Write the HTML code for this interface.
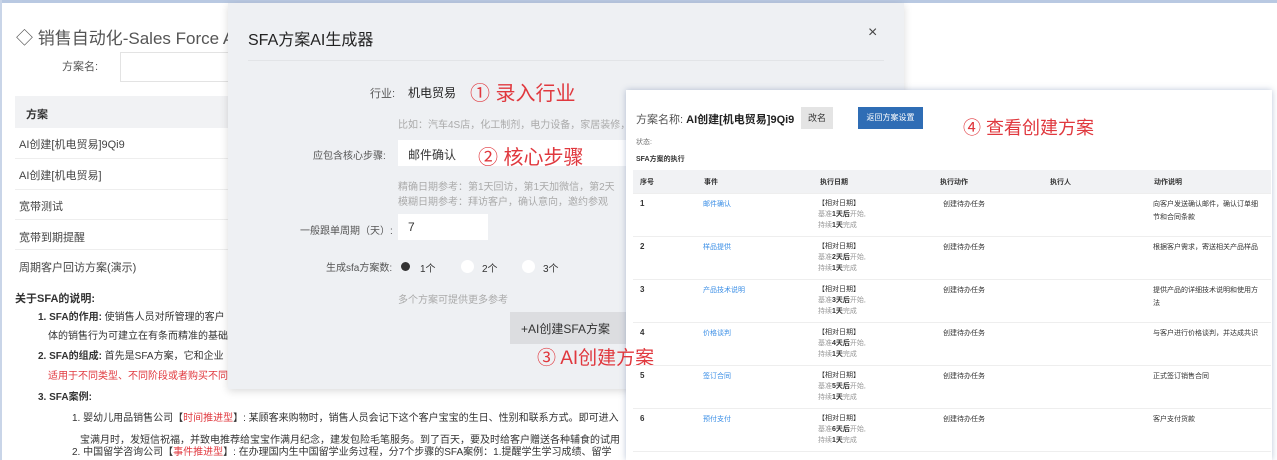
<!DOCTYPE html>
<html style="overflow:hidden;width:1277px;height:460px"><head><meta charset="utf-8"><style>
*{margin:0;padding:0;box-sizing:border-box}
body{width:1277px;height:460px;overflow:hidden;background:#fff;font-family:"Liberation Sans","Noto Sans CJK SC",sans-serif;color:#333;position:relative}
#w{position:absolute;left:0;top:0;width:1277px;height:460px;overflow:hidden}
.a{position:absolute;white-space:nowrap}
.red{color:#e0383e}
</style></head><body><div id="w">
<div class="a" style="left:0;top:0;width:1277px;height:3px;background:#b9c9e2"></div>
<div class="a" style="left:0;top:0;width:2px;height:460px;background:#c9d5e8"></div>
<!-- left page -->
<div class="a" style="left:16px;top:24px;font-size:17px;color:#555">◇ 销售自动化-Sales Force Au</div>
<div class="a" style="left:62px;top:58px;font-size:11px;color:#555">方案名:</div>
<div class="a" style="left:120px;top:52px;width:120px;height:30px;border:1px solid #e3e3e3;border-right:none"></div>
<div class="a" style="left:15px;top:96px;width:220px;height:32px;background:#f1f2f4"></div>
<div class="a" style="left:26px;top:106px;font-size:11px;font-weight:bold">方案</div>
<div class="a" style="left:19px;top:136px;font-size:11px;color:#444">AI创建[机电贸易]9Qi9</div>
<div class="a" style="left:15px;top:158px;width:220px;height:1px;background:#eee"></div>
<div class="a" style="left:19px;top:167px;font-size:11px;color:#444">AI创建[机电贸易]</div>
<div class="a" style="left:15px;top:189px;width:220px;height:1px;background:#eee"></div>
<div class="a" style="left:19px;top:198px;font-size:11px;color:#444">宽带测试</div>
<div class="a" style="left:15px;top:219px;width:220px;height:1px;background:#eee"></div>
<div class="a" style="left:19px;top:229px;font-size:11px;color:#444">宽带到期提醒</div>
<div class="a" style="left:15px;top:249px;width:220px;height:1px;background:#eee"></div>
<div class="a" style="left:19px;top:259px;font-size:11px;color:#444">周期客户回访方案(演示)</div>
<div class="a" style="left:15px;top:290px;font-size:11px;font-weight:bold">关于SFA的说明:</div>
<div class="a" style="left:38px;top:308px;font-size:10px"><b>1. SFA的作用:</b> 使销售人员对所管理的客户</div>
<div class="a" style="left:48px;top:327px;font-size:10px">体的销售行为可建立在有条而精准的基础</div>
<div class="a" style="left:38px;top:347px;font-size:10px"><b>2. SFA的组成:</b> 首先是SFA方案，它和企业</div>
<div class="a red" style="left:48px;top:367px;font-size:10px">适用于不同类型、不同阶段或者购买不同</div>
<div class="a" style="left:38px;top:388px;font-size:10px"><b>3. SFA案例:</b></div>
<div class="a" style="left:72px;top:409px;font-size:10px">1. 婴幼儿用品销售公司【<span class="red">时间推进型</span>】: 某顾客来购物时，销售人员会记下这个客户宝宝的生日、性别和联系方式。即可进入</div>
<div class="a" style="left:80px;top:431px;font-size:10px">宝满月时，发短信祝福，并致电推荐给宝宝作满月纪念，建发包险毛笔服务。到了百天，要及时给客户赠送各种辅食的试用</div>
<div class="a" style="left:72px;top:447px;font-size:10px;line-height:12px">2. 中国留学咨询公司【<span class="red">事件推进型</span>】: 在办理国内生中国留学业务过程，分7个步骤的SFA案例：1.提醒学生学习成绩、留学</div>
<!-- modal 1 -->
<div class="a" style="left:228px;top:3px;width:676px;height:386px;background:#eef0f3;box-shadow:0 2px 8px rgba(0,0,0,.15)"></div>
<div class="a" style="left:248px;top:26px;font-size:16px;color:#222">SFA方案AI生成器</div>
<div class="a" style="left:868px;top:24px;font-size:16px;color:#444">×</div>
<div class="a" style="left:248px;top:60px;width:636px;height:1px;background:#e2e4e7"></div>
<div class="a" style="left:370px;top:85px;font-size:11px;color:#555">行业:</div>
<div class="a" style="left:408px;top:84px;font-size:12px;color:#222">机电贸易</div>
<div class="a red" style="left:470px;top:77px;font-size:20px">① 录入行业</div>
<div class="a" style="left:398px;top:116px;font-size:10px;color:#aaa">比如：汽车4S店，化工制剂，电力设备，家居装修，</div>
<div class="a" style="left:313px;top:147px;font-size:10px;color:#555">应包含核心步骤:</div>
<div class="a" style="left:398px;top:140px;width:230px;height:26px;background:#fff"></div>
<div class="a" style="left:408px;top:146px;font-size:12px;color:#333">邮件确认</div>
<div class="a red" style="left:478px;top:141px;font-size:20px">② 核心步骤</div>
<div class="a" style="left:398px;top:178px;font-size:10px;color:#aaa">精确日期参考：第1天回访，第1天加微信，第2天</div>
<div class="a" style="left:398px;top:193px;font-size:10px;color:#aaa">模糊日期参考：拜访客户，确认意向，邀约参观</div>
<div class="a" style="left:300px;top:222px;font-size:10px;color:#555">一般跟单周期（天）:</div>
<div class="a" style="left:398px;top:214px;width:90px;height:26px;background:#fff"></div>
<div class="a" style="left:408px;top:220px;font-size:12px">7</div>
<div class="a" style="left:326px;top:259px;font-size:10px;color:#555">生成sfa方案数:</div>
<div class="a" style="left:401px;top:262px;width:9px;height:9px;border-radius:50%;background:#333"></div>
<div class="a" style="left:420px;top:260px;font-size:10px">1个</div>
<div class="a" style="left:461px;top:260px;width:13px;height:13px;border-radius:50%;background:#fff"></div>
<div class="a" style="left:482px;top:260px;font-size:10px">2个</div>
<div class="a" style="left:522px;top:260px;width:13px;height:13px;border-radius:50%;background:#fff"></div>
<div class="a" style="left:543px;top:260px;font-size:10px">3个</div>
<div class="a" style="left:398px;top:291px;font-size:10px;color:#aaa">多个方案可提供更多参考</div>
<div class="a" style="left:510px;top:312px;width:116px;height:32px;background:#dcdde0"></div>
<div class="a" style="left:521px;top:320px;font-size:12px;color:#333">+AI创建SFA方案</div>
<!-- modal 2 -->
<div class="a" style="left:626px;top:90px;width:646px;height:370px;background:#fff;box-shadow:0 0 6px rgba(60,90,140,.35)"></div>
<div class="a red" style="left:537px;top:343px;font-size:19px">③ AI创建方案</div>
<div class="a" style="left:636px;top:111px;font-size:11px;color:#555">方案名称: <span style="color:#222;font-weight:bold">AI创建[机电贸易]9Qi9</span></div>
<div class="a" style="left:801px;top:107px;width:32px;height:22px;background:#e4e4e4;font-size:9px;line-height:22px;text-align:center">改名</div>
<div class="a" style="left:858px;top:107px;width:65px;height:22px;background:#2f6db5;color:#fff;font-size:8px;line-height:22px;text-align:center">返回方案设置</div>
<div class="a red" style="left:963px;top:114px;font-size:18px">④ 查看创建方案</div>
<div class="a" style="left:636px;top:137px;font-size:7px;color:#777">状态:</div>
<div class="a" style="left:636px;top:154px;font-size:7px;font-weight:bold">SFA方案的执行</div>
<div class="a" style="left:633px;top:170px;width:638px;height:23px;background:#f1f2f4"></div>
<div class="a" style="left:640px;top:177px;font-size:7px;font-weight:bold">
<span class="a" style="left:0">序号</span><span class="a" style="left:64px">事件</span><span class="a" style="left:180px">执行日期</span><span class="a" style="left:300px">执行动作</span><span class="a" style="left:410px">执行人</span><span class="a" style="left:514px">动作说明</span></div>
<div id="rows"></div>
</div>
<script>
var ev=["邮件确认","样品提供","产品技术说明","价格谈判","签订合同","预付支付","跟进"];
var ds=["向客户发送确认邮件，确认订单细节和合同条款","根据客户需求，寄送相关产品样品","提供产品的详细技术说明和使用方法","与客户进行价格谈判，并达成共识","正式签订销售合同","客户支付货款","售后跟进"];
var h="";
for(var i=0;i<7;i++){var y=193+i*43;
h+='<div class="a" style="left:633px;top:'+y+'px;width:638px;height:1px;background:#eee"></div>';
if(i==6){break;}
h+='<div class="a" style="left:640px;top:'+(y+6)+'px;font-size:8px;font-weight:bold">'+(i+1)+'</div>';
h+='<div class="a" style="left:703px;top:'+(y+6)+'px;font-size:7px;color:#3a8ee6">'+ev[i]+'</div>';
h+='<div class="a" style="left:818px;top:'+(y+5)+'px;font-size:7px;line-height:11px;color:#999"><span style="color:#333">【相对日期】</span><br>基准<b style="color:#333">'+(i+1)+'天后</b>开始,<br>持续<b style="color:#333">1天</b>完成</div>';
h+='<div class="a" style="left:943px;top:'+(y+6)+'px;font-size:7px">创建待办任务</div>';
h+='<div class="a" style="left:1153px;top:'+(y+5)+'px;width:110px;white-space:normal;font-size:7px;line-height:13px">'+ds[i]+'</div>';}
document.getElementById("rows").innerHTML=h;
</script>
</body></html>
